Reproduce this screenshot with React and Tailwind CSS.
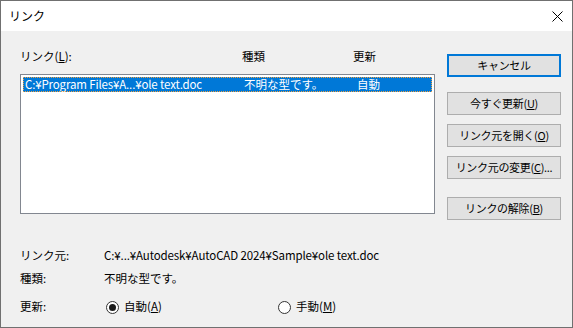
const font = { fontFamily: '"Noto Sans CJK JP", "Noto Sans", sans-serif' };

function Btn({ children, primary }) {
  return (
    <button
      className={`h-[23px] w-[114px] flex items-center justify-center bg-[#e1e1e1] text-[11px] tracking-[-0.3px] leading-none text-black ${
        primary ? "border-2 border-[#0078d7]" : "border border-[#adadad]"
      }`}
    >
      {children}
    </button>
  );
}

function Radio({ checked, children }) {
  return (
    <div className="flex items-center">
      <span className="ml-[2px] w-[13px] h-[13px] rounded-full border border-[#333333] bg-white flex items-center justify-center">
        {checked && <span className="w-[7px] h-[7px] rounded-full bg-[#1a1a1a]" />}
      </span>
      <span className="ml-[5px]">{children}</span>
    </div>
  );
}

export default function App() {
  return (
    <div
      className="w-[573px] h-[328px] border border-[#707070] bg-[#f0f0f0] flex flex-col text-[11.5px] text-black"
      style={font}
    >
      {/* title bar */}
      <div className="h-[30px] bg-white flex items-center justify-between pl-[8px] pr-[9px] text-[12px]">
        <span className="leading-none">リンク</span>
        <svg width="11" height="11" viewBox="0 0 11 11">
          <path d="M0.5 0.5 L10.5 10.5 M10.5 0.5 L0.5 10.5" stroke="#000" strokeWidth="1" />
        </svg>
      </div>

      <div className="flex-1 pl-[19px] pr-[11px] flex flex-col">
        <div className="flex">
          {/* list side */}
          <div className="w-[415px] pt-[18px]">
            <div className="h-[16px] flex items-center leading-none">
              <span className="w-[222px]">
                リンク(<span className="underline">L</span>):
              </span>
              <span className="w-[111px]">種類</span>
              <span>更新</span>
            </div>
            <div className="mt-[9px] h-[140px] border border-[#828790] bg-white pt-[2px] pl-[2px] pr-[2px]">
              <div className="h-[15px] bg-[#0078d7] text-white flex items-center leading-none outline-1 outline-dotted outline-[#f0a040] -outline-offset-1">
                <span className="w-[221px] pl-[2px] tracking-[-0.15px]">C:¥Program Files¥A...¥ole text.doc</span>
                <span className="w-[113px]">不明な型です。</span>
                <span>自動</span>
              </div>
            </div>
          </div>

          {/* buttons */}
          <div className="ml-[12px] pt-[23px] flex flex-col">
            <Btn primary>キャンセル</Btn>
            <div className="mt-[15px] flex flex-col gap-[9px]">
              <Btn>
                今すぐ更新(<span className="underline">U</span>)
              </Btn>
              <Btn>
                リンク元を開く(<span className="underline">O</span>)
              </Btn>
              <Btn>
                リンク元の変更(<span className="underline">C</span>)...
              </Btn>
            </div>
            <div className="mt-[18px]">
              <Btn>
                リンクの解除(<span className="underline">B</span>)
              </Btn>
            </div>
          </div>
        </div>

        {/* details */}
        <div className="mt-[28px] flex flex-col leading-none">
          <div className="h-[16px] flex items-center">
            <span className="w-[84px]">リンク元:</span>
            <span className="tracking-[-0.12px]">C:¥...¥Autodesk¥AutoCAD 2024¥Sample¥ole text.doc</span>
          </div>
          <div className="mt-[7px] h-[16px] flex items-center">
            <span className="w-[84px]">種類:</span>
            <span>不明な型です。</span>
          </div>
          <div className="mt-[12px] h-[16px] flex items-center">
            <span className="w-[84px]">更新:</span>
            <div className="w-[172px]">
              <Radio checked>
                自動(<span className="underline">A</span>)
              </Radio>
            </div>
            <Radio>
              手動(<span className="underline">M</span>)
            </Radio>
          </div>
        </div>
      </div>
    </div>
  );
}
